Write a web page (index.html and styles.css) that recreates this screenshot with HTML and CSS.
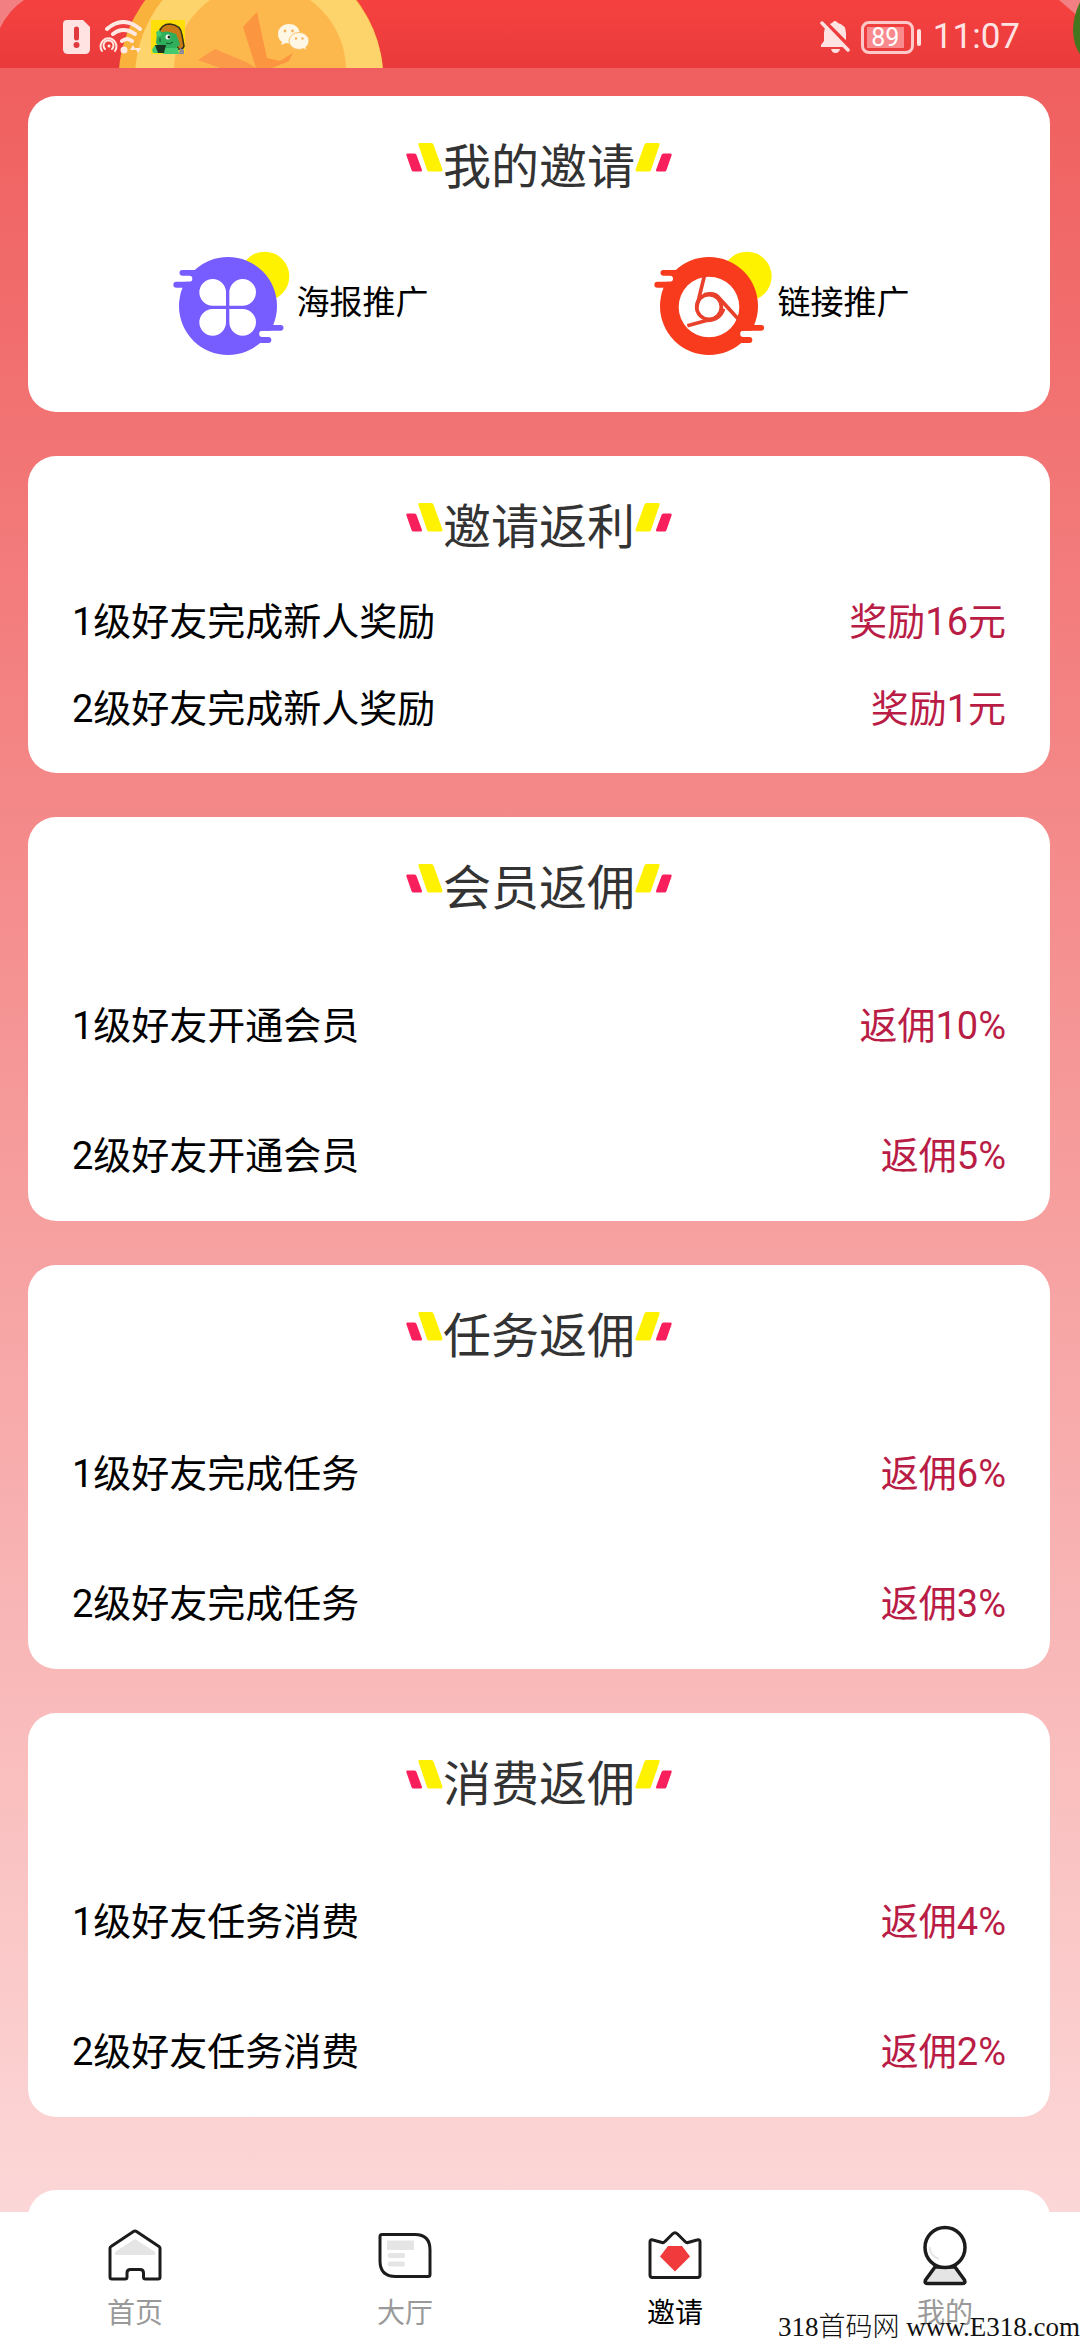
FILE: index.html
```html
<!DOCTYPE html>
<html lang="zh-CN">
<head>
<meta charset="utf-8">
<meta name="viewport" content="width=device-width, initial-scale=1">
<title>我的邀请</title>
<link rel="stylesheet" href="styles.css">
</head>
<body>
<svg class="defs" aria-hidden="true">
  <symbol id="mark-left" viewBox="0 0 37 48">
    <path d="M13.500 0h12q1.500 0 2 1.500l9 25q.5 2-1.500 2H23q-1.500 0-2-1.500L12.500 2q-.5-2 1-2z" fill="#fff200"/>
    <path d="M1.500 10.500H8.500q1.500 0 2 1.500l5.500 15q.5 1.500-1.500 1.500H7.500q-1.500 0-2-1.500L.3 12q-.3-1.500 1.200-1.500z" fill="#f91f5d"/>
  </symbol>
  <symbol id="mark-right" viewBox="0 0 37 48"><g transform="matrix(-1 0 0 1 37 0)"><path d="M13.500 0h12q1.500 0 2 1.500l9 25q.5 2-1.500 2H23q-1.500 0-2-1.500L12.500 2q-.5-2 1-2z" fill="#fff200"/><path d="M1.500 10.500H8.500q1.500 0 2 1.500l5.500 15q.5 1.500-1.500 1.500H7.500q-1.500 0-2-1.500L.3 12q-.3-1.500 1.200-1.500z" fill="#f91f5d"/></g></symbol>
</svg>

<div class="app">
  <header class="status">
    <svg class="status-art" width="400" height="68" viewBox="0 0 400 68" aria-hidden="true">
      <path d="M0 0H24Q9 10 0 28z" fill="#f28083"/>
      <circle cx="251" cy="80" r="132.500" fill="#f9b23c"/>
      <circle cx="259" cy="78" r="124" fill="#fdd36b"/>
      <circle cx="260" cy="70" r="86" fill="#fdb84d"/>
      <path d="M243 27L257 12L267 58L280 61L293 53L289 61L272 68H256z" fill="#fb9540"/>
      <path d="M198 60L215 49L248 63L256 68H220z" fill="#fb9a48"/>
    </svg>
    <svg class="status-edge" width="24" height="68" viewBox="0 0 24 68" aria-hidden="true">
      <path d="M3 0H24V18z" fill="#f28083"/>
      <path d="M24 2Q17 16 17 32Q18 46 24 54z" fill="#44761f"/>
    </svg>
    <div class="status-left">
      <svg width="27" height="34" viewBox="0 0 27 34" aria-hidden="true">
        <path d="M4 0H20L27 7V29Q27 34 22 34H5Q0 34 0 29V4Q0 0 4 0z" fill="#ffe3e3"/>
        <path d="M13.500 9V18" stroke="#e03a3c" stroke-width="5" stroke-linecap="round"/><circle cx="13.500" cy="25" r="3" fill="#e03a3c"/>
      </svg>
      <svg width="43" height="34" viewBox="0 0 43 34" fill="none" stroke="#ffe9e2" stroke-width="4" stroke-linecap="round" aria-hidden="true">
        <path d="M8 9Q24-5 41 9M14 14Q24 6 36 14M23 21Q28 17 33 21"/>
        <g stroke-width="2"><path d="M3 31A8 8 0 1 1 16 31M6 29A5 5 0 1 1 13 29"/></g>
        <circle cx="10" cy="26" r="1.500" fill="#ffe9e2" stroke="none"/>
        <circle cx="25" cy="30" r="3.500" fill="#ffe9e2" stroke="none"/>
        <path d="M34 25l3 5h-6zM39 33l-3-5h6z" fill="#ffe9e2" stroke="none"/>
      </svg>
      <svg width="34" height="34" viewBox="0 0 34 34" aria-hidden="true">
        <path d="M0 0H34V34H0z" fill="#ffdf08"/>
        <path d="M8 13Q10 4 19 4Q30 5 31 15L33 26Q32 30 27 29L24 15z" fill="#c97b18" stroke="#33301a" stroke-width="1.500"/>
        <path d="M6 14Q14 9 25 14L29 24Q27 29 19 29Q8 29 5 23z" fill="#2fae5b"/>
        <path d="M5 12l4-2 2 5-5 2zM1 30q2-6 8-5l2 8H2zM14 28h13l1 6H12z" fill="#43c970"/>
        <path d="M4 25h11l-2 8H7z" fill="#17351f"/>
        <circle cx="17" cy="17" r="2.500" fill="#fff"/><circle cx="18" cy="17" r="1.500" fill="#102b18"/><path d="M9 18v4M15 23q4 2 7-1" stroke="#14512b" fill="none"/>
        <path d="M29 28l4 2v4h-5z" fill="#8c8a9c"/>
      </svg>
      <svg class="wechat" width="31" height="27" viewBox="0 0 31 27" aria-hidden="true">
        <path d="M11 0C4.500 0 0 4.500 0 10c0 4 2 6.500 4 8l-1 3 5-2q3 .8 5 0L22 9Q20 0 11 0z" fill="#fff7e5"/>
        <ellipse cx="21" cy="17" rx="10" ry="8.500" fill="#fff7e5" stroke="#fcc26a" stroke-width="1"/><path d="M25 23l3 3-1-5z" fill="#fff7e5"/>
        <g fill="#f3b25c"><circle cx="7" cy="7" r="1.400"/><circle cx="14.500" cy="7" r="1.400"/><circle cx="18" cy="14.500" r="1.200"/><circle cx="24.500" cy="14.500" r="1.200"/></g>
      </svg>
    </div>
    <div class="status-right">
      <svg width="31" height="34" viewBox="0 0 31 34" aria-hidden="true">
        <path d="M1 25L4 21V13Q4 5 12 3Q15-1 18 3Q26 5 26 13V22L29 27H1z" fill="#ffe3e3"/>
        <path d="M11 29H20Q19 33 15.500 33Q12 33 11 29z" fill="#ffe3e3"/>
        <path d="M4 1L31 28" stroke="#ee3c3d" stroke-width="4"/>
        <path d="M2 3L28 30" stroke="#ffe3e3" stroke-width="3.500" stroke-linecap="round"/>
      </svg>
      <div class="battery"><span class="battery-level">89</span></div>
      <time class="clock">11:07</time>
    </div>
  </header>

  <main class="content">
    <section class="card">
      <h2 class="title"><svg class="mark"><use href="#mark-left"/></svg>我的邀请<svg class="mark"><use href="#mark-right"/></svg></h2>
      <div class="promos">
        <button class="promo" type="button">
          <svg width="120" height="120" viewBox="66 39 360 360" aria-hidden="true">
            <circle cx="341" cy="139" r="74" fill="#fff200"/>
            <circle cx="231" cy="228" r="147" fill="#775dff"/>
            <path d="M60 137H115a9 9 0 0 1 0 18H60zM400 302H334a9.500 9.500 0 0 0 0 19H400z" fill="#fff"/>
            <path d="M94 120H150V137H94a8.500 8.500 0 0 1 0-17zM76 155H130V173H76a9 9 0 0 1 0-18zM320 285H389a8.500 8.500 0 0 1 0 17H320zM300 321H352a8.500 8.500 0 0 1 0 18H300z" fill="#775dff"/>
            <path d="M225 227H185a40 40 0 1 1 40-40zM235 227H275a40 40 0 1 0-40-40zM225 237H185a40 40 0 1 0 40 40zM235 237H275a40 40 0 1 1-40 40z" fill="#fff"/>
          </svg>
          <span>海报推广</span>
        </button>
        <button class="promo" type="button">
          <svg width="120" height="120" viewBox="72 39 360 360" aria-hidden="true">
            <circle cx="351" cy="139" r="74" fill="#fff200"/>
            <circle cx="237" cy="228" r="147" fill="#f73b1c"/>
            <path d="M66 137H120a9 9 0 0 1 0 18H66zM406 302H340a9.500 9.500 0 0 0 0 19H406z" fill="#fff"/>
            <path d="M100 120H156V137H100a8.500 8.500 0 0 1 0-17zM82 155H136V173H82a9 9 0 0 1 0-18zM326 285H394a8.500 8.500 0 0 1 0 17H326zM306 321H358a8.500 8.500 0 0 1 0 18H306z" fill="#f73b1c"/>
            <circle cx="237" cy="231" r="91" fill="#fff"/>
            <circle cx="237" cy="231" r="37" fill="none" stroke="#e8402b" stroke-width="11"/>
            <path d="M223 138L200 232M222 194Q255 185 268 205L324 266M172 287L232 271Q270 270 281 236" fill="none" stroke="#e8402b" stroke-width="11"/>
          </svg>
          <span>链接推广</span>
        </button>
      </div>
    </section>

    <section class="card">
      <h2 class="title"><svg class="mark"><use href="#mark-left"/></svg>邀请返利<svg class="mark"><use href="#mark-right"/></svg></h2>
      <ul class="rows compact">
        <li><span>1级好友完成新人奖励</span><span class="value">奖励16元</span></li>
        <li><span>2级好友完成新人奖励</span><span class="value">奖励1元</span></li>
      </ul>
    </section>

    <section class="card">
      <h2 class="title"><svg class="mark"><use href="#mark-left"/></svg>会员返佣<svg class="mark"><use href="#mark-right"/></svg></h2>
      <ul class="rows">
        <li><span>1级好友开通会员</span><span class="value">返佣10%</span></li>
        <li><span>2级好友开通会员</span><span class="value">返佣5%</span></li>
      </ul>
    </section>

    <section class="card">
      <h2 class="title"><svg class="mark"><use href="#mark-left"/></svg>任务返佣<svg class="mark"><use href="#mark-right"/></svg></h2>
      <ul class="rows">
        <li><span>1级好友完成任务</span><span class="value">返佣6%</span></li>
        <li><span>2级好友完成任务</span><span class="value">返佣3%</span></li>
      </ul>
    </section>

    <section class="card">
      <h2 class="title"><svg class="mark"><use href="#mark-left"/></svg>消费返佣<svg class="mark"><use href="#mark-right"/></svg></h2>
      <ul class="rows">
        <li><span>1级好友任务消费</span><span class="value">返佣4%</span></li>
        <li><span>2级好友任务消费</span><span class="value">返佣2%</span></li>
      </ul>
    </section>

    <section class="card next"></section>
  </main>

  <nav class="tabs">
    <a class="tab" href="#home">
      <svg width="60" height="64" viewBox="0 0 60 64" aria-hidden="true">
        <path d="M30 14L50 27Q51 30 48 30H12Q9 30 10 27z" fill="#e5e5e5"/>
        <path d="M28.500 6.500Q30 5.500 31.500 6.500L54 21.500Q55 22.500 55 23V52Q55 54 53 54H40.500Q38.500 54 38.500 52V48Q38.500 44.500 35 44.500H25.500Q22 44.500 22 48V52Q22 54 20 54H7Q5 54 5 52V23Q5 22 6 21.500z" fill="none" stroke="#1c1c1c" stroke-width="3" stroke-linejoin="round"/>
      </svg>
      <span>首页</span>
    </a>
    <a class="tab" href="#hall">
      <svg width="60" height="64" viewBox="0 0 60 64" aria-hidden="true">
        <path d="M12 15.500H39V25H12zM14 28H29q2 2.500 0 5H14q-3-2.500 0-5zM14 36.500H29q2 2.500 0 5H14q-3-2.500 0-5z" fill="#e5e5e5"/>
        <path d="M7 9.500H40Q55 9.500 55 25V49.500Q55 51.500 53 51.500H21Q5 51.500 5 36V11.500Q5 9.500 7 9.500z" fill="none" stroke="#1c1c1c" stroke-width="3"/>
      </svg>
      <span>大厅</span>
    </a>
    <a class="tab active" href="#invite" aria-current="page">
      <svg width="60" height="64" viewBox="0 0 60 64" aria-hidden="true">
        <path d="M5 17Q5 14 8 15L17 17.500Q19 18 20 16.500L27.500 9Q30 6.500 32.500 9L40 16.500Q41.500 18 43 17.500L52 15Q55 14 55 17V50Q55 52.500 52.500 52.500H7.500Q5 52.500 5 50z" fill="none" stroke="#1c1c1c" stroke-width="3"/>
        <path d="M23 21H37L45 31.500L30 46.500L15 31.500z" fill="#f03a3c"/>
      </svg>
      <span>邀请</span>
    </a>
    <a class="tab" href="#mine">
      <svg width="60" height="64" viewBox="0 0 60 64" aria-hidden="true">
        <path d="M20 42L10.500 55Q9 58.500 13 58.500H47Q51 58.500 49.500 55L40 42z" fill="#e5e5e5" stroke="#1c1c1c" stroke-width="3.500" stroke-linejoin="round"/>
        <circle cx="30" cy="22.500" r="20" fill="#fff" stroke="#1c1c1c" stroke-width="3.500"/>
        <path d="M14.500 22Q15 31 24 34" fill="none" stroke="#e5e5e5" stroke-width="2"/>
      </svg>
      <span>我的</span>
    </a>
  </nav>
  <div class="watermark">318首码网 www.E318.com</div>
</div>
</body>
</html>
```
FILE: styles.css
```css
* {
  box-sizing: border-box;
}

body {
  margin: 0;
  font-family: Roboto, "Noto Sans CJK SC", sans-serif;
  color: #000;
}

.defs {
  position: absolute;
  width: 0;
  height: 0;
}

.app {
  position: relative;
  display: flex;
  flex-direction: column;
  height: 100vh;
  overflow: hidden;
}

/* Status bar */
.status {
  position: relative;
  flex: none;
  display: flex;
  justify-content: space-between;
  height: 68px;
  padding: 6px 60px 0 63px;
  background: linear-gradient(#f54240, #e93a3b);
}

.status-art,
.status-edge {
  position: absolute;
  top: 0;
}

.status-art {
  left: 0;
}

.status-edge {
  right: 0;
}

.status-left,
.status-right {
  position: relative;
  display: flex;
  align-items: center;
}

.status-left {
  gap: 9px;
}

.status-right {
  gap: 10px;
}

.wechat {
  margin-left: 84px;
}

.battery {
  position: relative;
  width: 53px;
  height: 33px;
  margin-right: 9px;
  padding: 3px;
  border: 3px solid #ffc9ca;
  border-radius: 8px;
}

.battery::after {
  content: "";
  position: absolute;
  top: 5px;
  right: -10px;
  width: 4px;
  height: 17px;
  border-radius: 2px;
  background: #ffe3e3;
}

.battery-level {
  display: block;
  width: 37px;
  height: 21px;
  background: #f98a8d;
  color: #fff;
  font-size: 25px;
  line-height: 21px;
  text-align: center;
}

.clock {
  color: #ffe3e3;
  font-size: 35px;
  line-height: 40px;
}

/* Scrolling content */
.content {
  flex: 1;
  min-height: 0;
  display: flex;
  flex-direction: column;
  gap: 44px;
  padding: 28px 30px 0 28px;
  overflow-y: auto;
  scrollbar-width: none;
  background: linear-gradient(#f05f5f, #fcd7d7);
}

.card {
  flex: none;
  padding: 36px 44px 0;
  border-radius: 28px;
  background: #fff;
}

.title {
  display: flex;
  justify-content: center;
  align-items: center;
  margin: 0;
  color: #333;
  font-size: 48px;
  font-weight: 400;
  line-height: 72px;
}

.mark {
  width: 37px;
  height: 50px;
  padding-bottom: 2px;
}

.promos {
  display: grid;
  grid-template-columns: 1fr 1fr;
  margin: 39px -16px 0 -12px;
  padding-bottom: 49px;
}

.promo {
  display: flex;
  justify-content: center;
  align-items: center;
  gap: 4px;
  padding: 0;
  border: 0;
  background: none;
  color: #000;
  font: inherit;
  font-size: 33px;
  line-height: 48px;
}

.rows {
  margin: 0;
  padding: 36px 0 0;
  list-style: none;
}

.rows li {
  display: flex;
  justify-content: space-between;
  align-items: center;
  height: 130px;
  font-size: 38px;
  line-height: 56px;
}

.rows.compact {
  padding: 14px 0 21px;
}

.rows.compact li {
  height: 87px;
}

.value {
  color: #b91d46;
}

.next {
  min-height: 316px;
  margin-top: 29px;
}

/* Bottom navigation */
.tabs {
  flex: none;
  display: grid;
  grid-template-columns: repeat(4, 1fr);
  background: #fff;
}

.tab {
  display: flex;
  flex-direction: column;
  align-items: center;
  gap: 5px;
  padding: 13px 0 6px;
  color: #999;
  font-size: 28px;
  line-height: 40px;
  text-decoration: none;
}

.tab.active {
  color: #000;
}

.watermark {
  position: absolute;
  right: 0;
  bottom: 0;
  color: #111;
  font-family: "Liberation Serif", "Noto Sans CJK SC", serif;
  font-size: 27px;
  font-weight: 300;
  line-height: 26px;
  white-space: nowrap;
}
```
